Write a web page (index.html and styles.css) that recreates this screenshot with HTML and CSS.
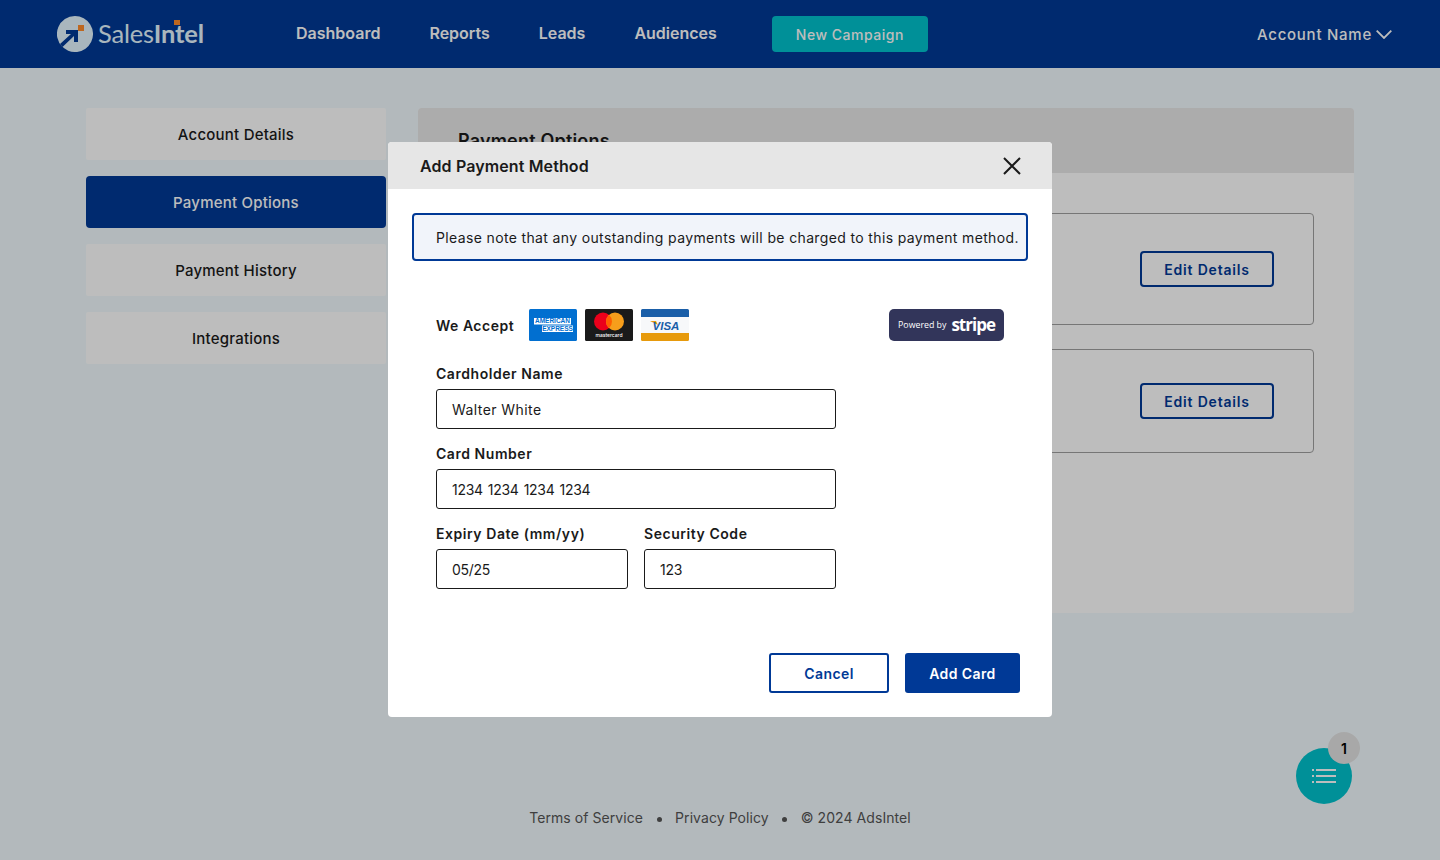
FILE: index.html
```html
<!DOCTYPE html>
<html lang="en">
<head>
<meta charset="utf-8">
<title>Payment Options</title>
<link rel="stylesheet" href="styles.css">
</head>
<body>
<div class="page">
  <header class="topbar">
    <a class="logo">
      <svg class="logo-mark" width="36" height="36" viewBox="0 0 36 36">
        <path d="M18 0a18 18 0 1 1-14 29.300L15 18H9v-4h12v12h-4v-6L5.500 31A18 18 0 0 1 18 0z" fill="#e4f6ff"/>
        <path d="M3 28 14 18H9v-4h12v12h-4v-6L5.500 31 3 28z" fill="#003996"/>
        <rect x="21" y="9" width="6" height="6" fill="#ff8c2a"/>
      </svg>
      <span class="logo-text">Sales<b>In<span class="logo-t">t<i class="logo-tick"></i></span>el</b></span>
    </a>
    <nav class="nav">
      <a>Dashboard</a>
      <a>Reports</a>
      <a>Leads</a>
      <a>Audiences</a>
    </nav>
    <button class="new-campaign">New Campaign</button>
    <div class="account">
      <span>Account Name</span>
      <svg width="16" height="9" viewBox="0 0 16 9"><path d="M.7.7 8 8 15.300.7" fill="none" stroke="#fff" stroke-width="1.800"/></svg>
    </div>
  </header>

  <main class="content">
    <aside class="sidebar">
      <a class="side-item">Account Details</a>
      <a class="side-item active">Payment Options</a>
      <a class="side-item">Payment History</a>
      <a class="side-item">Integrations</a>
    </aside>
    <section class="panel">
      <div class="panel-head">Payment Options</div>
      <div class="panel-body">
        <div class="pay-card tall"><button class="edit">Edit Details</button></div>
        <div class="pay-card"><button class="edit">Edit Details</button></div>
      </div>
    </section>
  </main>

  <footer class="footer">
    <span>Terms of Service</span><i class="dot"></i>
    <span>Privacy Policy</span><i class="dot"></i>
    <span>© 2024 AdsIntel</span>
  </footer>
</div>

<div class="fab">
  <svg width="26" height="14" viewBox="0 0 26 14" fill="#fff">
    <rect x="0" y="0" width="2" height="2"/><rect x="4" y="0" width="20" height="2"/>
    <rect x="0" y="6" width="2" height="2"/><rect x="4" y="6" width="20" height="2"/>
    <rect x="0" y="12" width="2" height="2"/><rect x="4" y="12" width="20" height="2"/>
  </svg>
  <span class="fab-badge">1</span>
</div>

<div class="scrim"></div>

<div class="modal">
  <div class="modal-head">
    <h2>Add Payment Method</h2>
    <svg width="18" height="18" viewBox="0 0 18 18"><path d="M1 1l16 16M17 1 1 17" stroke="#1a1a1a" stroke-width="2" fill="none"/></svg>
  </div>
  <div class="modal-body">
    <div class="notice">Please note that any outstanding payments will be charged to this payment method.</div>
    <div class="form">
      <div class="accept">
        <span class="accept-label">We Accept</span>
        <div class="brands">
          <svg width="48" height="32" viewBox="0 0 48 32">
            <rect width="48" height="32" rx="1.500" fill="#016fd0"/>
            <rect x="5" y="9" width="37" height="6.500" fill="#fff"/>
            <rect x="13" y="16.500" width="31" height="6.500" fill="#fff"/>
            <text x="23.500" y="14.400" class="amex">AMERICAN</text>
            <text x="28.500" y="21.900" class="amex">EXPRESS</text>
          </svg>
          <svg width="48" height="32" viewBox="0 0 48 32">
            <rect width="48" height="32" rx="1.500" fill="#1a1a1a"/>
            <circle cx="18" cy="12.500" r="9" fill="#eb001b"/>
            <circle cx="30" cy="12.500" r="9" fill="#f79e1b"/>
            <path d="M24 5.800a9 9 0 0 1 0 13.400 9 9 0 0 1 0-13.400z" fill="#ff5f00"/>
            <text x="24" y="27.500" class="mc">mastercard</text>
          </svg>
          <svg width="48" height="32" viewBox="0 0 48 32">
            <rect width="48" height="32" rx="1.500" fill="#f7f8fa"/>
            <path d="M0 8V1.500A1.500 1.500 0 0 1 1.500 0h45A1.500 1.500 0 0 1 48 1.500V8z" fill="#1a5ea8"/>
            <path d="M0 24h48v6.500a1.500 1.500 0 0 1-1.500 1.500h-45A1.500 1.500 0 0 1 0 30.500z" fill="#e79a0c"/>
            <path d="M9 12h6l2 4z" fill="#e79a0c"/>
            <text x="25" y="20.500" class="visa">VISA</text>
          </svg>
        </div>
        <div class="stripe">Powered by <b>stripe</b></div>
      </div>
      <div class="field">
        <label>Cardholder Name</label>
        <div class="input">Walter White</div>
      </div>
      <div class="field">
        <label>Card Number</label>
        <div class="input digits">1234 1234 1234 1234</div>
      </div>
      <div class="field-row">
        <div class="field">
          <label>Expiry Date (mm/yy)</label>
          <div class="input digits">05/25</div>
        </div>
        <div class="field">
          <label>Security Code</label>
          <div class="input digits">123</div>
        </div>
      </div>
    </div>
    <div class="actions">
      <button class="btn outline">Cancel</button>
      <button class="btn solid">Add Card</button>
    </div>
  </div>
</div>
</body>
</html>
```
FILE: styles.css
```css
* { box-sizing: border-box; }
html, body { margin: 0; height: 100%; }
body {
  font-family: Inter, "Liberation Sans", sans-serif;
  font-size: 14px;
  color: #1a1a1a;
  background: #f2fafe;
  overflow: hidden;
}
.page { min-height: 860px; display: flex; flex-direction: column; }

.topbar {
  height: 68px;
  background: #003996;
  display: flex;
  align-items: center;
  padding: 0 48px 0 57px;
  color: #fff;
}
.logo { display: flex; align-items: center; gap: 5px; width: 239px; }
.logo-text { font-family: Lato, sans-serif; font-size: 25.500px; color: #e4f6ff; line-height: 1; letter-spacing: -.2px; }
.logo-text b { font-weight: 700; }
.logo-t { position: relative; }
.logo-tick { position: absolute; left: -1px; top: 2px; width: 6px; height: 5px; background: #ff8c2a; }
.nav { display: flex; gap: 49px; font-size: 16px; font-weight: 600; margin-top: -2px; }
.new-campaign {
  margin-left: 55px;
  width: 156px;
  height: 36px;
  border: 0;
  border-radius: 4px;
  background: #00c3cd;
  color: #fff;
  font: 500 14px Inter, sans-serif;
  letter-spacing: .5px;
  padding: 0;
}
.account { margin-left: auto; display: flex; align-items: center; gap: 4px; font-size: 15px; font-weight: 500; letter-spacing: .75px; }

.content { display: flex; gap: 32px; padding: 40px 86px 0; }
.sidebar { width: 300px; display: flex; flex-direction: column; gap: 16px; }
.side-item {
  height: 52px;
  display: flex;
  align-items: center;
  justify-content: center;
  background: #fff;
  border-radius: 2px;
  font-size: 15px;
  font-weight: 500;
  letter-spacing: .22px;
}
.side-item.active { background: #003996; color: #fff; border-radius: 4px; }

.panel { flex: 1; background: #fff; border-radius: 4px; height: 505px; overflow: hidden; }
.panel-head {
  height: 65px;
  padding: 22px 40px 0;
  background: #e8e8e8;
  font-size: 18px;
  font-weight: 600;
  letter-spacing: .2px;
}
.panel-body { padding: 40px; display: flex; flex-direction: column; gap: 24px; }
.pay-card {
  height: 104px;
  border: 1px solid #a0a0a0;
  border-radius: 4px;
  display: flex;
  align-items: center;
  justify-content: flex-end;
  padding-right: 39px;
}
.pay-card.tall { height: 112px; }
.edit {
  width: 134px;
  height: 36px;
  border: 2px solid #003996;
  border-radius: 4px;
  background: #fff;
  color: #003996;
  font: 600 14px Inter, sans-serif;
  letter-spacing: .8px;
  padding: 0;
}

.footer {
  margin-top: auto;
  padding-bottom: 32px;
  display: flex;
  justify-content: center;
  align-items: center;
  gap: 13.500px;
  line-height: 20px;
  color: #555;
  letter-spacing: .07px;
}
.dot { width: 5px; height: 5px; border-radius: 50%; background: #555; margin: 2px 0 0; }

.scrim { position: fixed; inset: 0; background: rgba(0, 0, 0, .26); }

.modal {
  position: fixed;
  left: 388px;
  top: 142px;
  width: 664px;
  height: 575px;
  background: #fff;
  border-radius: 4px;
  overflow: hidden;
}
.modal-head {
  height: 47px;
  background: #e6e6e6;
  display: flex;
  align-items: center;
  justify-content: space-between;
  padding: 0 31px 0 32px;
}
.modal-head h2 { margin: 0; font-size: 16px; font-weight: 600; letter-spacing: .12px; }
.modal-body { padding: 24px; }
.notice {
  height: 48px;
  border: 2px solid #003996;
  border-radius: 4px;
  background: #f1f4fa;
  display: flex;
  align-items: center;
  padding-left: 22px;
  white-space: nowrap;
  letter-spacing: .36px;
}
.form { padding: 48px 24px 0; }
.accept { height: 32px; display: flex; align-items: center; margin-bottom: 24px; }
.accept-label { font-weight: 600; letter-spacing: .5px; width: 93px; }
.brands { display: flex; gap: 8px; }
.brands svg { display: block; }
.amex { font: 700 6.500px "Liberation Sans", sans-serif; fill: #016fd0; text-anchor: middle; }
.mc { font: 500 5px Inter, sans-serif; fill: #fff; text-anchor: middle; }
.visa { font: italic 700 11.500px "Liberation Sans", sans-serif; fill: #1a5ea8; text-anchor: middle; }
.stripe {
  margin-left: auto;
  width: 115px;
  height: 32px;
  border-radius: 5px;
  background: #32355a;
  color: #fff;
  display: flex;
  align-items: center;
  justify-content: center;
  gap: 5px;
  font: 500 8.800px "Open Sans", sans-serif;
}
.stripe b { font: 700 17px/1 "Open Sans", sans-serif; letter-spacing: -1px; margin-top: -2px; }
.field { width: 400px; margin-bottom: 16px; }
.field label { display: block; height: 24px; line-height: 18px; font-weight: 600; letter-spacing: .55px; }
.input {
  height: 40px;
  border: 1px solid #1a1a1a;
  border-radius: 3px;
  display: flex;
  align-items: center;
  padding-left: 15px;
  letter-spacing: .43px;
}
.input.digits { letter-spacing: -.3px; word-spacing: 1.500px; }
.field-row { display: flex; gap: 16px; width: 400px; }
.field-row .field { width: 192px; }
.actions { display: flex; justify-content: flex-end; gap: 16px; margin-top: 48px; padding-right: 8px; }
.btn { height: 40px; border-radius: 3px; font: 600 14px Inter, sans-serif; letter-spacing: .4px; padding: 0; }
.btn.outline { width: 120px; background: #fff; color: #003996; border: 2px solid #003996; }
.btn.solid { width: 115px; background: #003996; color: #fff; border: 0; }

.fab {
  position: fixed;
  left: 1296px;
  top: 748px;
  width: 56px;
  height: 56px;
  border-radius: 50%;
  background: #00c3cd;
  display: flex;
  align-items: center;
  justify-content: center;
}
.fab svg { display: block; margin-left: 1px; }
.fab-badge {
  position: absolute;
  left: 32px;
  top: -16px;
  width: 32px;
  height: 32px;
  border-radius: 50%;
  background: #e3e3e3;
  display: flex;
  align-items: center;
  justify-content: center;
  font-weight: 600;
  color: #000;
}
```
